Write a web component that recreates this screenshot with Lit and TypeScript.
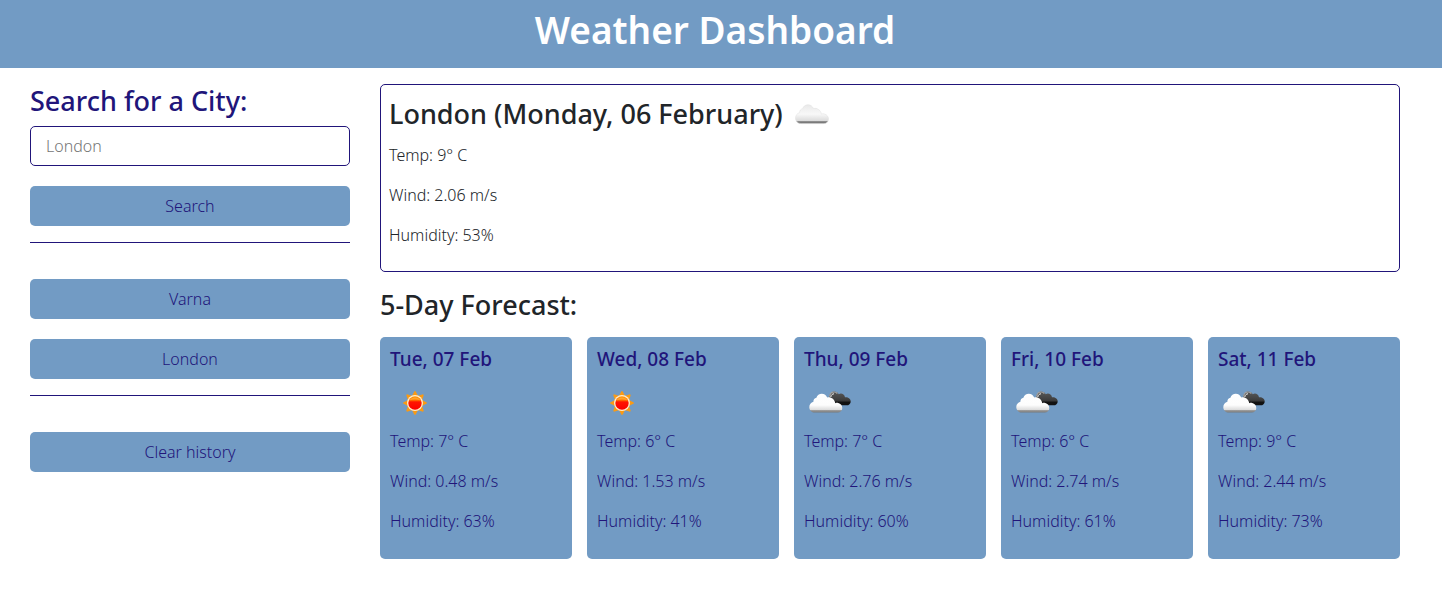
import { LitElement, html, css, svg } from "lit";
import { customElement, property } from "lit/decorators.js";

type Sky = "cloud" | "sun" | "broken";

interface Reading {
  date: string;
  sky: Sky;
  temp: string;
  wind: string;
  humidity: string;
}

const FRONT_CLOUD =
  "M11 33.6C7.6 33.6 5.3 31 5.3 28.2C5.3 25.4 7 23.3 9.4 22.7C9.3 20.6 10.6 18.9 12.4 18.7C13.2 16.2 15.3 14.7 17.8 14.7C20.3 14.7 22.3 16.2 23.2 18.5C26.8 17.6 30.6 20 31.2 24.2C32 23.7 33.2 23.6 34.3 24C36.7 24.7 38.3 26.6 38.3 29C38.3 31.8 36.3 33.6 33.6 33.6Z";

const RAYS = [0, 45, 90, 135, 180, 225, 270, 315];

@customElement("weather-icon")
export class WeatherIcon extends LitElement {
  static styles = css`
    :host {
      display: block;
      flex: none;
    }
    .icon {
      display: block;
      width: 50px;
      height: 50px;
    }
    .inline {
      height: 42px;
    }
  `;

  @property() sky: Sky = "cloud";

  private gradients() {
    return svg`
      <defs>
        <linearGradient id="white" x1="0" y1="0" x2="0" y2="1">
          <stop offset="0" stop-color="#fff" />
          <stop offset="0.6" stop-color="#fdfdfd" />
          <stop offset="0.84" stop-color="#dedede" />
          <stop offset="0.89" stop-color="#999" />
          <stop offset="1" stop-color="#777" />
        </linearGradient>
        <linearGradient id="grey" x1="0" y1="0" x2="0" y2="1">
          <stop offset="0" stop-color="#e9e9e9" />
          <stop offset="0.5" stop-color="#f8f8f8" />
          <stop offset="0.84" stop-color="#dcdcdc" />
          <stop offset="0.89" stop-color="#8c8c8c" />
          <stop offset="1" stop-color="#666" />
        </linearGradient>
        <linearGradient id="dark" x1="0" y1="0" x2="0" y2="1">
          <stop offset="0" stop-color="#5a5a5a" />
          <stop offset="0.65" stop-color="#3c3c3c" />
          <stop offset="0.8" stop-color="#111" />
          <stop offset="1" stop-color="#111" />
        </linearGradient>
        <linearGradient id="core" x1="0" y1="0" x2="0" y2="1">
          <stop offset="0" stop-color="#ff9a10" />
          <stop offset="0.3" stop-color="#ff6a00" />
          <stop offset="0.42" stop-color="#ff1400" />
          <stop offset="1" stop-color="#fa0000" />
        </linearGradient>
      </defs>
    `;
  }

  private drawing() {
    if (this.sky === "sun") {
      return svg`
        ${RAYS.map(
          (a) => svg`<path d="M24.4 12.2H25.6L28.8 18.6H21.2Z" fill="#f99a14" transform="rotate(${a} 25 24)" />`
        )}
        <circle cx="25" cy="24" r="8" fill="#ffeccc" />
        <circle cx="25" cy="24" r="6.7" fill="url(#core)" />
        <path d="M19.8 21.2C20.8 17.6 29.2 17.6 30.2 21.2C27 20.2 23 20.2 19.8 21.2Z" fill="#ffc040" opacity="0.6" />
      `;
    }
    if (this.sky === "broken") {
      return svg`
        <path d="M25 20C25 15 27 12.4 30.2 12.4C32.5 12.4 34 13.6 34.8 15.2C37 13.7 40.3 14.8 41 18.2C44 17.8 46.7 19.6 46.7 22.4C46.7 24.8 45 26.3 42.4 26.3H30Z" fill="url(#dark)" />
        <path d="M25.6 17.6C26 14.6 27.8 13 30 13C31.4 13 32.6 13.6 33.4 14.5" fill="none" stroke="#a9a9a9" stroke-width="1.2" />
        <path d="M26.8 18C27.2 15.8 28.4 14.8 30 14.8" fill="none" stroke="#f2f2f2" stroke-width="1" />
        <path d="${FRONT_CLOUD}" fill="url(#white)" />
      `;
    }
    return svg`<path d="${FRONT_CLOUD}" fill="url(#grey)" stroke="#dedede" stroke-width="0.5" transform="translate(3.2 1)" />`;
  }

  render() {
    const inline = this.sky === "cloud";
    return html`
      <svg class="icon ${inline ? "inline" : ""}" viewBox=${inline ? "0 4 50 42" : "0 0 50 50"} aria-hidden="true">
        ${this.gradients()} ${this.drawing()}
      </svg>
    `;
  }
}

@customElement("app-root")
export class AppRoot extends LitElement {
  static styles = css`
    :host {
      --blue: #729bc4;
      --navy: #21157a;
      display: block;
      font: 300 16px/24px "Noto Sans", "Open Sans", sans-serif;
      color: #212529;
    }
    * {
      box-sizing: border-box;
    }
    h1,
    h2,
    h3,
    p {
      margin: 0;
    }
    .header {
      background: var(--blue);
      color: #fff;
      padding: 6px 12px 14px 0;
      text-align: center;
    }
    .title {
      font-size: 37px;
      line-height: 48px;
      font-weight: 600;
    }
    .layout {
      display: grid;
      grid-template-columns: minmax(0, 1fr) minmax(0, 3fr);
      padding: 16px 27px 16px 15px;
    }
    .sidebar,
    .content {
      padding: 0 15px;
    }
    .heading {
      font-size: 27px;
      line-height: 34px;
      font-weight: 500;
    }
    .form {
      display: grid;
    }
    .label {
      color: var(--navy);
      margin-bottom: 8px;
    }
    .field,
    .button {
      width: 100%;
      height: 40px;
      border-radius: 5px;
      font: inherit;
    }
    .field {
      border: 1px solid var(--navy);
      padding: 0 15px;
      margin-bottom: 20px;
      background: #fff;
      color: #212529;
    }
    .field::placeholder {
      color: #757575;
      opacity: 1;
    }
    .button {
      border: 0;
      padding: 0;
      background: var(--blue);
      color: var(--navy);
      cursor: pointer;
    }
    .rule {
      border: 0;
      border-top: 1px solid var(--navy);
      margin: 16px 0 36px;
    }
    .history {
      display: grid;
      gap: 20px;
    }
    .today {
      border: 1px solid var(--navy);
      border-radius: 5px;
      padding: 8px;
    }
    .place {
      display: flex;
      align-items: center;
      gap: 4px;
      margin-bottom: 8px;
    }
    .reading {
      color: #212529;
      margin-bottom: 16px;
    }
    .forecast {
      margin: 16px 0 15px;
    }
    .days {
      display: grid;
      grid-template-columns: repeat(5, minmax(0, 1fr));
      gap: 15px;
    }
    .day {
      background: var(--blue);
      color: var(--navy);
      border-radius: 5px;
      padding: 10px;
    }
    .day .reading {
      color: inherit;
    }
    .date {
      font-size: 19px;
      line-height: 24px;
      font-weight: 500;
      margin-bottom: 8px;
    }
  `;

  private history = ["Varna", "London"];

  private today: Reading = {
    date: "Monday, 06 February",
    sky: "cloud",
    temp: "9",
    wind: "2.06",
    humidity: "53",
  };

  private days: Reading[] = [
    { date: "Tue, 07 Feb", sky: "sun", temp: "7", wind: "0.48", humidity: "63" },
    { date: "Wed, 08 Feb", sky: "sun", temp: "6", wind: "1.53", humidity: "41" },
    { date: "Thu, 09 Feb", sky: "broken", temp: "7", wind: "2.76", humidity: "60" },
    { date: "Fri, 10 Feb", sky: "broken", temp: "6", wind: "2.74", humidity: "61" },
    { date: "Sat, 11 Feb", sky: "broken", temp: "9", wind: "2.44", humidity: "73" },
  ];

  private readings(r: Reading) {
    return html`
      <p class="reading">Temp: ${r.temp}° C</p>
      <p class="reading">Wind: ${r.wind} m/s</p>
      <p class="reading">Humidity: ${r.humidity}%</p>
    `;
  }

  render() {
    return html`
      <header class="header"><h1 class="title">Weather Dashboard</h1></header>
      <main class="layout">
        <aside class="sidebar">
          <form class="form" @submit=${(e: Event) => e.preventDefault()}>
            <label class="heading label" for="city">Search for a City:</label>
            <input class="field" id="city" type="text" placeholder="London" />
            <button class="button" type="submit">Search</button>
          </form>
          <hr class="rule" />
          <div class="history">
            ${this.history.map((c) => html`<button class="button" type="button">${c}</button>`)}
          </div>
          <hr class="rule" />
          <button class="button" type="button">Clear history</button>
        </aside>
        <div class="content">
          <section class="today">
            <div class="place">
              <h2 class="heading">London (${this.today.date})</h2>
              <weather-icon .sky=${this.today.sky}></weather-icon>
            </div>
            ${this.readings(this.today)}
          </section>
          <h2 class="heading forecast">5-Day Forecast:</h2>
          <section class="days">
            ${this.days.map(
              (d) => html`
                <article class="day">
                  <h3 class="date">${d.date}</h3>
                  <weather-icon .sky=${d.sky}></weather-icon>
                  ${this.readings(d)}
                </article>
              `
            )}
          </section>
        </div>
      </main>
    `;
  }
}
